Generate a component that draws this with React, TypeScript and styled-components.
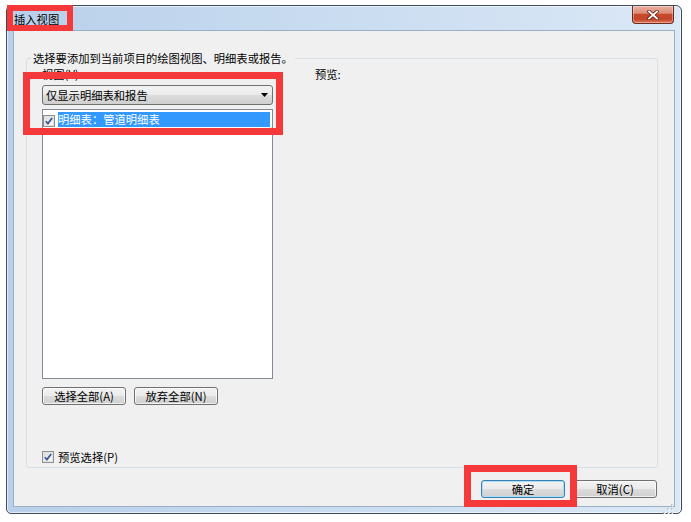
import React from "react";
import styled, { createGlobalStyle } from "styled-components";

const Global = createGlobalStyle`
  html, body { margin: 0; padding: 0; background: #ffffff; }
  body {
    width: 691px; height: 522px; overflow: hidden;
    font-family: "Noto Sans CJK SC", "Noto Sans", sans-serif;
    color: #000;
  }
`;

const Stage = styled.div`
  position: relative;
  width: 691px;
  height: 522px;
  box-sizing: border-box;
  padding: 5px 0 0 6px;
`;

const Window = styled.div`
  width: 676px;
  height: 509px;
  box-sizing: border-box;
  border: 1px solid #3f4b5b;
  border-radius: 6px 6px 5px 5px;
  background: linear-gradient(to right, #b9d0ea 0%, #c8dbf0 45%, #dbe8f6 100%);
  box-shadow: inset 0 0 0 1px rgba(255, 255, 255, 0.6);
  padding: 0 6px 6px 6px;
  display: flex;
  flex-direction: column;
`;

const TitleBar = styled.div`
  height: 24px;
  display: flex;
  align-items: flex-start;
  justify-content: space-between;
`;

const Title = styled.div`
  padding: 6px 0 0 1px;
  font-size: 11.3px;
  line-height: 14px;
  color: #000;
`;

const CloseButton = styled.div`
  width: 42px;
  height: 18px;
  margin-right: 1px;
  box-sizing: border-box;
  border: 1px solid #6d2a1e;
  border-top: none;
  border-radius: 0 0 4px 4px;
  background: linear-gradient(
    to bottom,
    #eab0a1 0%,
    #dd8c76 42%,
    #c8492d 50%,
    #c4462a 78%,
    #e07858 100%
  );
  box-shadow: inset 0 0 0 1px rgba(255, 255, 255, 0.35);
  display: flex;
  align-items: center;
  justify-content: center;
`;

const Client = styled.div`
  position: relative;
  flex: 1;
  box-sizing: border-box;
  border: 1px solid #9aaec4;
  background: #f0f0f0;
  padding: 20px 16px 8px 12px;
  display: flex;
  flex-direction: column;
`;

const Group = styled.fieldset`
  flex: 1;
  margin: 0;
  padding: 0;
  min-width: 0;
  border: 1px solid #d5dfe5;
  border-radius: 3px;
  display: flex;
  flex-direction: column;
`;

const GroupLegend = styled.legend`
  margin-left: 4px;
  padding: 0 2px;
  font-size: 11.3px;
  line-height: 14px;
`;

const GroupBody = styled.div`
  flex: 1;
  display: flex;
  padding: 2px 0 3px 15px;
`;

const LeftColumn = styled.div`
  width: 231px;
  display: flex;
  flex-direction: column;
`;

const RightColumn = styled.div`
  flex: 1;
  padding-left: 42px;
`;

const Label = styled.div`
  font-size: 11.3px;
  line-height: 14px;
  height: 14px;
`;

const Combo = styled.div`
  margin-top: 4px;
  height: 20px;
  box-sizing: border-box;
  border: 1px solid #707070;
  border-radius: 3px;
  background: linear-gradient(to bottom, #f2f2f2 0%, #ebebeb 50%, #dddddd 50%, #cfcfcf 100%);
  display: flex;
  align-items: center;
  justify-content: space-between;
  padding: 0 4px 0 3px;
  font-size: 11.3px;
  line-height: 14px;
`;

const ListBox = styled.div`
  margin-top: 4px;
  height: 270px;
  box-sizing: border-box;
  border: 1px solid #848a98;
  background: #ffffff;
  padding: 1px 2px 0 0;
`;

const ListRow = styled.div`
  display: flex;
  align-items: flex-end;
  height: 16px;
`;

const RowText = styled.div<{ $selected?: boolean }>`
  flex: 1;
  margin-left: 3px;
  height: 15px;
  background: ${(p) => (p.$selected ? "#3399ff" : "transparent")};
  color: ${(p) => (p.$selected ? "#ffffff" : "#000000")};
  font-size: 11.3px;
  line-height: 15px;
  white-space: nowrap;
`;

const ButtonRow = styled.div<{ $end?: boolean }>`
  display: flex;
  gap: 8px;
  justify-content: ${(p) => (p.$end ? "flex-end" : "flex-start")};
`;

const TopButtons = styled(ButtonRow)`
  margin-top: 8px;
`;

const BottomButtons = styled(ButtonRow)`
  margin-top: 12px;
  margin-right: 1px;
`;

const Button = styled.div<{ $default?: boolean }>`
  width: 84px;
  height: 18px;
  box-sizing: border-box;
  border: 1px solid ${(p) => (p.$default ? "#3c7fb1" : "#707070")};
  border-radius: 3px;
  background: linear-gradient(to bottom, #f2f2f2 0%, #ebebeb 50%, #dddddd 50%, #cfcfcf 100%);
  box-shadow: ${(p) =>
    p.$default ? "inset 0 0 0 1px #a9dcf7" : "inset 0 0 0 1px rgba(255,255,255,0.7)"};
  display: flex;
  align-items: center;
  justify-content: center;
  font-size: 11.3px;
  line-height: 14px;
  white-space: nowrap;
`;

const Spacer = styled.div`
  flex: 1;
`;

const CheckRow = styled.div`
  display: flex;
  align-items: center;
  height: 14px;
  gap: 4px;
  font-size: 11.3px;
  line-height: 14px;
`;

const Grip = styled.div`
  position: absolute;
  right: 1px;
  bottom: 1px;
  width: 10px;
  height: 10px;
`;

const RedBox = styled.div<{ $w: number; $h: number; $x: number; $y: number; $t: number }>`
  position: absolute;
  left: ${(p) => p.$x}px;
  top: ${(p) => p.$y}px;
  width: ${(p) => p.$w}px;
  height: ${(p) => p.$h}px;
  box-sizing: border-box;
  border: ${(p) => p.$t}px solid #f5393b;
  pointer-events: none;
`;

const CheckBox: React.FC = () => (
  <svg width="12" height="12" viewBox="0 0 12 12">
    <defs>
      <linearGradient id="cbg" x1="0" y1="0" x2="1" y2="1">
        <stop offset="0" stopColor="#d9dbdd" />
        <stop offset="1" stopColor="#fbfbfb" />
      </linearGradient>
    </defs>
    <rect x="0.5" y="0.5" width="11" height="11" fill="#f6f6f6" stroke="#8e8f8f" />
    <rect x="1.5" y="1.5" width="9" height="9" fill="url(#cbg)" stroke="#e2e2e2" />
    <path d="M2.8 6.2 L4.9 8.6 L9.2 2.9" fill="none" stroke="#3a5694" strokeWidth="1.7" />
  </svg>
);

const ComboArrow: React.FC = () => (
  <svg width="7" height="4" viewBox="0 0 7 4">
    <path d="M0 0 H7 L3.5 4 Z" fill="#000" />
  </svg>
);

const CloseGlyph: React.FC = () => (
  <svg width="12" height="10" viewBox="0 0 12 10">
    <path d="M2 1.5 L10 8.5 M10 1.5 L2 8.5" stroke="#5b1a10" strokeWidth="3.4" strokeLinecap="square" />
    <path d="M2 1.5 L10 8.5 M10 1.5 L2 8.5" stroke="#ffffff" strokeWidth="1.9" strokeLinecap="square" />
  </svg>
);

const GripDots: React.FC = () => {
  const pts = [
    [8, 0],
    [8, 4],
    [4, 4],
    [8, 8],
    [4, 8],
    [0, 8],
  ];
  return (
    <svg width="10" height="10" viewBox="0 0 10 10">
      {pts.map(([x, y]) => (
        <g key={`${x}-${y}`}>
          <rect x={x + 1} y={y + 1} width="1.5" height="1.5" fill="#ffffff" />
          <rect x={x} y={y} width="1.5" height="1.5" fill="#b8b8b8" />
        </g>
      ))}
    </svg>
  );
};

export default function App() {
  return (
    <>
      <Global />
      <Stage>
        <Window>
          <TitleBar>
            <Title>插入视图</Title>
            <CloseButton>
              <CloseGlyph />
            </CloseButton>
          </TitleBar>
          <Client>
            <Group>
              <GroupLegend>选择要添加到当前项目的绘图视图、明细表或报告。</GroupLegend>
              <GroupBody>
                <LeftColumn>
                  <Label>视图(V):</Label>
                  <Combo>
                    <span>仅显示明细表和报告</span>
                    <ComboArrow />
                  </Combo>
                  <ListBox>
                    <ListRow>
                      <CheckBox />
                      <RowText $selected>明细表：管道明细表</RowText>
                    </ListRow>
                  </ListBox>
                  <TopButtons>
                    <Button>选择全部(A)</Button>
                    <Button>放弃全部(N)</Button>
                  </TopButtons>
                  <Spacer />
                  <CheckRow>
                    <CheckBox />
                    <span>预览选择(P)</span>
                  </CheckRow>
                </LeftColumn>
                <RightColumn>
                  <Label>预览:</Label>
                </RightColumn>
              </GroupBody>
            </Group>
            <BottomButtons $end>
              <Button $default>确定</Button>
              <Button>取消(C)</Button>
            </BottomButtons>
            <Grip>
              <GripDots />
            </Grip>
          </Client>
        </Window>
        <RedBox $x={7} $y={5} $w={66} $h={26} $t={6} />
        <RedBox $x={23} $y={72} $w={260} $h={63} $t={7} />
        <RedBox $x={464} $y={465} $w={113} $h={42} $t={7} />
      </Stage>
    </>
  );
}
